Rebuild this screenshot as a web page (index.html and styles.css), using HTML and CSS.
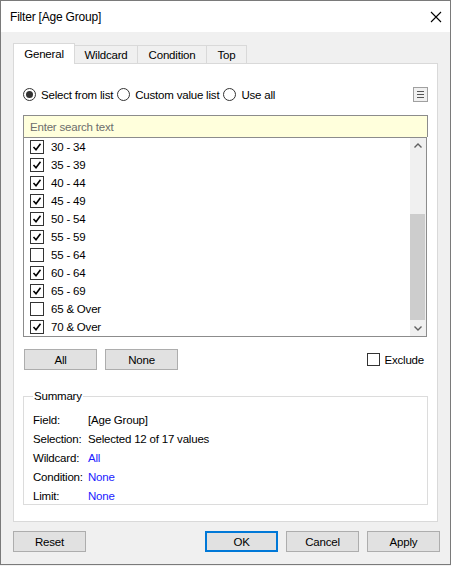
FILE: index.html
```html
<!DOCTYPE html>
<html>
<head>
<meta charset="utf-8">
<link rel="stylesheet" href="styles.css">
</head>
<body>
<div class="window">
  <div class="titlebar">
    <span class="title">Filter [Age Group]</span>
    <svg class="close" width="12" height="12" viewBox="0 0 12 12"><path d="M1 1 L11 11 M11 1 L1 11" stroke="#000" stroke-width="1.1" fill="none"/></svg>
  </div>
  <div class="content">
    <div class="tabs">
      <div class="tab active">General</div>
      <div class="tab t-wild">Wildcard</div>
      <div class="tab t-cond">Condition</div>
      <div class="tab t-top">Top</div>
    </div>
    <div class="panel">
      <div class="radio-row">
        <span class="radio on"></span><span class="rlabel">Select from list</span>
        <span class="radio"></span><span class="rlabel">Custom value list</span>
        <span class="radio"></span><span class="rlabel">Use all</span>
        <span class="menu-btn">
          <svg width="13" height="13" viewBox="0 0 13 13"><path d="M3 3.5 H10 M3 6.5 H10 M3 9.5 H10" stroke="#555" stroke-width="1.2"/></svg>
        </span>
      </div>
      <div class="search">Enter search text</div>
      <div class="list">
        <div class="items">
          <div class="item"><span class="cb on"></span>30 - 34</div>
          <div class="item"><span class="cb on"></span>35 - 39</div>
          <div class="item"><span class="cb on"></span>40 - 44</div>
          <div class="item"><span class="cb on"></span>45 - 49</div>
          <div class="item"><span class="cb on"></span>50 - 54</div>
          <div class="item"><span class="cb on"></span>55 - 59</div>
          <div class="item"><span class="cb"></span>55 - 64</div>
          <div class="item"><span class="cb on"></span>60 - 64</div>
          <div class="item"><span class="cb on"></span>65 - 69</div>
          <div class="item"><span class="cb"></span>65 &amp; Over</div>
          <div class="item"><span class="cb on"></span>70 &amp; Over</div>
        </div>
        <div class="scrollbar">
          <svg class="arrow" width="16" height="16" viewBox="0 0 16 16"><path d="M4.5 9.5 L8 6 L11.5 9.5" stroke="#606060" stroke-width="1.4" fill="none"/></svg>
          <div class="track"><div class="thumb"></div></div>
          <svg class="arrow" width="16" height="16" viewBox="0 0 16 16"><path d="M4.5 6.5 L8 10 L11.5 6.5" stroke="#606060" stroke-width="1.4" fill="none"/></svg>
        </div>
      </div>
      <div class="btn-row">
        <button class="btn">All</button>
        <button class="btn">None</button>
        <span class="exclude"><span class="cb"></span>Exclude</span>
      </div>
      <fieldset class="summary">
        <legend>Summary</legend>
        <div class="srow"><span class="sl">Field:</span><span>[Age Group]</span></div>
        <div class="srow"><span class="sl">Selection:</span><span>Selected 12 of 17 values</span></div>
        <div class="srow"><span class="sl">Wildcard:</span><span class="blue">All</span></div>
        <div class="srow"><span class="sl">Condition:</span><span class="blue">None</span></div>
        <div class="srow"><span class="sl">Limit:</span><span class="blue">None</span></div>
      </fieldset>
    </div>
    <div class="footer">
      <button class="btn">Reset</button>
      <span class="spacer"></span>
      <button class="btn primary">OK</button>
      <button class="btn">Cancel</button>
      <button class="btn">Apply</button>
    </div>
  </div>
</div>
</body>
</html>
```
FILE: styles.css
```css
* { box-sizing: border-box; }
html, body { margin: 0; padding: 0; background: #f0f0f0; }
body {
  font-family: "Liberation Sans", Arial, sans-serif;
  font-size: 11.5px;
  letter-spacing: -0.2px;
  color: #000;
}
.window {
  width: 451px;
  height: 565px;
  border: 1px solid #7a7a7a;
  background: #f0f0f0;
  display: flex;
  flex-direction: column;
}
.titlebar {
  height: 31px;
  background: #fff;
  display: flex;
  align-items: center;
  padding-left: 9px;
  padding-right: 8px;
  flex: none;
  font-size: 12px;
}
.title { flex: 1; }
.content {
  padding: 11px 0 0 12px;
  display: flex;
  flex-direction: column;
}
.tabs {
  display: flex;
  align-items: flex-end;
  height: 20px;
  position: relative;
  z-index: 1;
}
.tab {
  height: 18px;
  border: 1px solid #d9d9d9;
  border-bottom: none;
  border-left: none;
  background: #f0f0f0;
  display: flex;
  align-items: center;
  justify-content: center;
  padding-top: 1px;
}
.tab.active {
  height: 21px;
  width: 62px;
  background: #fff;
  border-left: 1px solid #d9d9d9;
  margin-bottom: -1px;
  padding-bottom: 2px;
}
.t-wild { width: 63px; }
.t-cond { width: 69px; }
.t-top { width: 40px; }
.panel {
  width: 425px;
  height: 459px;
  background: #fff;
  border: 1px solid #d9d9d9;
  padding: 23px 0 0 9px;
  display: flex;
  flex-direction: column;
}
.radio-row {
  display: flex;
  align-items: center;
  height: 15px;
  width: 405px;
}
.radio {
  width: 13px;
  height: 13px;
  border: 1px solid #333;
  border-radius: 50%;
  display: inline-flex;
  align-items: center;
  justify-content: center;
  margin-right: 5px;
  background: #fff;
  flex: none;
}
.radio.on::after {
  content: "";
  width: 7px;
  height: 7px;
  border-radius: 50%;
  background: #333;
}
.rlabel { margin-right: 4px; }
.menu-btn {
  margin-left: auto;
  width: 15px;
  height: 15px;
  border: 1px solid #a0a0a0;
  background: #f0f0f0;
  display: flex;
  align-items: center;
  justify-content: center;
}
.search {
  margin-top: 13px;
  width: 405px;
  height: 22px;
  border: 1px solid #8c8c8c;
  border-bottom: none;
  background: #ffffdc;
  color: #6d6d6d;
  padding-left: 6px;
  display: flex;
  align-items: center;
}
.list {
  width: 404px;
  height: 200px;
  border: 1px solid #8c8c8c;
  display: flex;
}
.items { flex: 1; }
.item {
  height: 18px;
  display: flex;
  align-items: center;
  padding-left: 6px;
}
.cb {
  width: 14px;
  height: 14px;
  border: 1px solid #333;
  background: #fff;
  margin-right: 7px;
  flex: none;
  display: inline-flex;
  align-items: center;
  justify-content: center;
}
.cb.on {
  background: #fff url("data:image/svg+xml;utf8,<svg xmlns='http://www.w3.org/2000/svg' width='12' height='12' viewBox='0 0 12 12'><path d='M2.5 6 L5 8.7 L9.5 2.8' stroke='black' stroke-width='1.6' fill='none'/></svg>") center/12px 12px no-repeat;
}
.scrollbar {
  width: 16px;
  background: #f0f0f0;
  display: flex;
  flex-direction: column;
}
.arrow { flex: none; display: block; }
.track {
  flex: 1;
  padding-top: 60px;
}
.thumb {
  height: 106px;
  width: 15px;
  background: #cdcdcd;
}
.btn-row {
  margin-top: 12px;
  display: flex;
  align-items: center;
  width: 405px;
  padding-left: 1px;
}
.btn {
  font-family: inherit;
  font-size: 11.5px;
  letter-spacing: -0.2px;
  color: #000;
  width: 73px;
  height: 21px;
  background: #e1e1e1;
  border: 1px solid #adadad;
  padding: 0;
  margin: 0 8px 0 0;
}
.exclude {
  margin-left: auto;
  display: flex;
  align-items: center;
  margin-right: 4px;
}
.exclude .cb { width: 13px; height: 13px; margin-right: 4px; }
.summary {
  margin: 20px 0 0 0;
  width: 405px;
  height: 115px;
  border: 1px solid #dcdcdc;
  padding: 8px 0 0 9px;
}
.summary legend {
  padding: 0 1px;
  margin-left: 0;
}
.srow {
  height: 19px;
  display: flex;
  align-items: center;
}
.sl { width: 55px; flex: none; }
.blue { color: #1a1aff; }
.footer {
  margin-top: 9px;
  display: flex;
  width: 427px;
}
.footer .btn { margin-right: 8px; }
.footer .btn:last-child { margin-right: 0; }
.spacer { flex: 1; }
.btn.primary { border: 2px solid #0078d7; }
```
